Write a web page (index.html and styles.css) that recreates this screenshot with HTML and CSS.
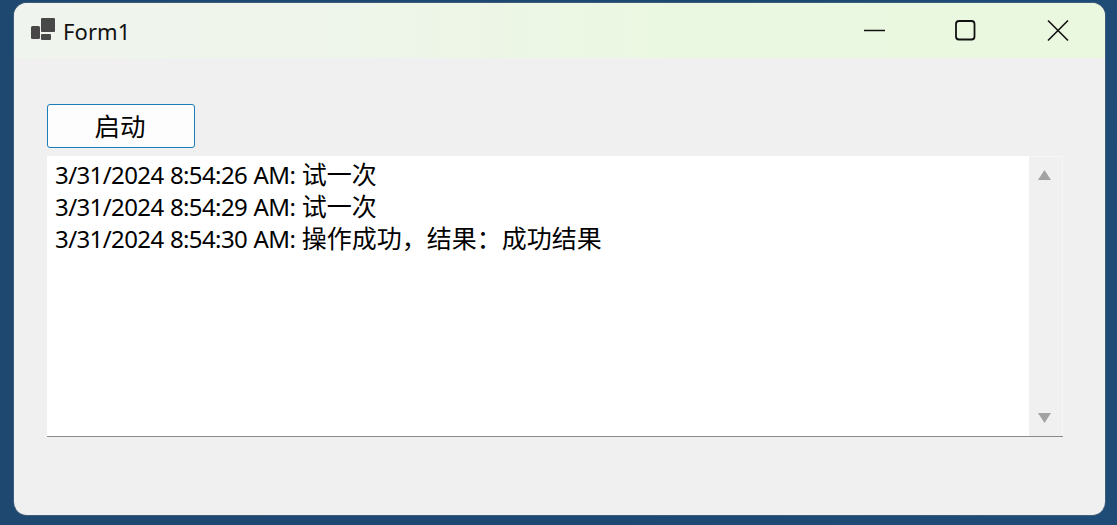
FILE: index.html
```html
<!DOCTYPE html>
<html lang="zh">
<head>
<meta charset="utf-8">
<title>Form1</title>
<link rel="stylesheet" href="styles.css">
</head>
<body>
<div class="window">
  <header class="titlebar">
    <svg class="app-icon" width="26" height="24" viewBox="0 0 26 24">
      <rect x="1" y="8" width="9" height="13" rx="1.5" fill="#484848"/>
      <rect x="11" y="0" width="14" height="14" rx="1" fill="#484848"/>
      <rect x="11" y="16" width="10" height="6" rx="1" fill="#484848"/>
    </svg>
    <span class="title">Form1</span>
    <div class="controls">
      <svg class="ctl" width="92" height="24" viewBox="0 0 92 24"><path d="M36 12.5H57" stroke="#111" stroke-width="1.6" fill="none"/></svg>
      <svg class="ctl" width="92" height="24" viewBox="0 0 92 24"><rect x="36" y="3" width="18.5" height="18.5" rx="3" stroke="#111" stroke-width="1.8" fill="none"/></svg>
      <svg class="ctl" width="92" height="24" viewBox="0 0 92 24"><path d="M36 2.5L56 22.5M56 2.5L36 22.5" stroke="#111" stroke-width="1.6" fill="none"/></svg>
    </div>
  </header>
  <main class="client">
    <button class="start">启动</button>
    <div class="listbox">
      <div class="lines">
        <div class="line">3/31/2024 8:54:26 AM: <span class="zh">试一次</span></div>
        <div class="line">3/31/2024 8:54:29 AM: <span class="zh">试一次</span></div>
        <div class="line">3/31/2024 8:54:30 AM: <span class="zh">操作成功，结果：成功结果</span></div>
      </div>
      <div class="scrollbar">
        <svg width="13" height="10" viewBox="0 0 13 10"><path d="M6.5 0L13 10H0Z" fill="#a2a2a2"/></svg>
        <svg width="13" height="10" viewBox="0 0 13 10"><path d="M0 0H13L6.5 10Z" fill="#a2a2a2"/></svg>
      </div>
    </div>
  </main>
</div>
</body>
</html>
```
FILE: styles.css
```css
* { box-sizing: border-box; }
html, body { margin: 0; height: 100%; }
body {
  width: 1117px;
  height: 525px;
  overflow: hidden;
  padding: 3px 12px 10px 14px;
  background: linear-gradient(100deg, #1e4870, #1d4872 60%, #1f4c77);
  font-family: "Noto Sans", "Noto Sans CJK SC", sans-serif;
  color: #000;
}
.window {
  height: 100%;
  display: flex;
  flex-direction: column;
  background: #f0f0f0;
  border-radius: 13px;
  overflow: hidden;
  box-shadow: 0 0 0 1px rgba(90, 110, 130, .55);
}
.titlebar {
  height: 55px;
  flex: none;
  display: flex;
  align-items: center;
  padding-left: 16px;
  padding-right: 1px;
  background: linear-gradient(90deg, #f0f4ee 0%, #eef5e9 35%, #ebf8e1 60%, #ebf8e0 100%);
}
.app-icon { flex: none; margin-top: -2px; }
.title {
  margin-left: 7px;
  font-size: 22px;
  letter-spacing: .1px;
  color: #111;
}
.controls {
  margin-left: auto;
  display: flex;
  margin-top: -2px;
}
.ctl { display: block; }
.client {
  flex: 1;
  display: flex;
  flex-direction: column;
  align-items: flex-start;
  padding: 46px 42px 0 33px;
}
.start {
  width: 148px;
  height: 44px;
  padding: 0 2px 3px 0;
  background: #fdfdfd;
  border: 1px solid #1a7cb8;
  border-radius: 3px;
  font-family: inherit;
  font-size: 25.5px;
  color: #000;
}
.listbox {
  margin-top: 8px;
  width: 1016px;
  height: 281px;
  display: flex;
  background: #fff;
  border-bottom: 1px solid #8a8a8a;
}
.lines {
  flex: 1;
  padding: 3px 0 0 8px;
  font-size: 24px;
  line-height: 32px;
}
.line {
  height: 32px;
  white-space: nowrap;
  letter-spacing: -.6px;
  word-spacing: .7px;
}
.zh { font-size: 25px; line-height: 1; letter-spacing: 0; }
.scrollbar {
  width: 34px;
  display: flex;
  flex-direction: column;
  align-items: center;
  justify-content: space-between;
  padding: 13px 2px 13px 0;
  background: #f0f0f0;
  border-top: 1px solid #f6f6f6;
  border-right: 1px solid #f6f6f6;
}
```
